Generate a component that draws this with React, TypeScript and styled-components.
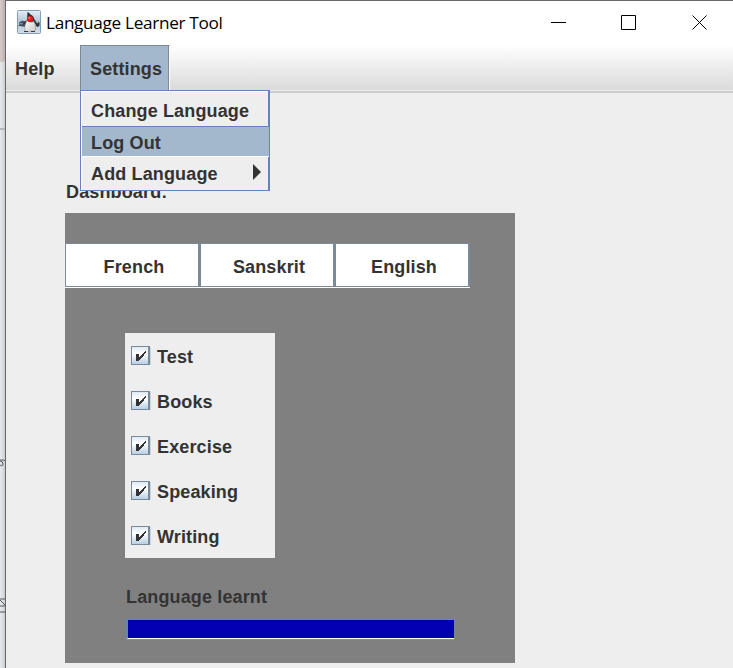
import React from "react";
import styled, { createGlobalStyle } from "styled-components";

const GlobalStyle = createGlobalStyle`
  * { box-sizing: border-box; }
  body { margin: 0; background: #eee; overflow: hidden; }
`;

const Desktop = styled.div`
  display: flex;
  width: 733px;
  height: 668px;
  overflow: hidden;
  color: #333;
  font: bold 18px/20px "Liberation Sans", Arial, sans-serif;
  letter-spacing: 0.14px;
`;

const Backdrop = styled.div`
  display: flex;
  flex-direction: column;
  width: 5px;
  flex: none;
  background: linear-gradient(90deg, #e9eaec, #dadcdf 60%, #c9cbce);
`;

const BackdropTop = styled.div`
  height: 62px;
  border-radius: 0 0 3px 0;
  background: linear-gradient(90deg, #d5cccb, #b9b0af);
`;

const BackdropLine = styled.div`
  height: 2px;
  margin-top: 66px;
  background: #b4b6b9;
`;

const BackdropMarks = styled.svg`
  display: block;
  width: 6px;
  height: 160px;
  margin-top: 326px;
  overflow: visible;
`;

const Window = styled.main`
  flex: 1;
  display: flex;
  flex-direction: column;
  min-width: 0;
  border-left: 1px solid #686868;
  border-top: 1px solid #686868;
  background: #eee;
`;

const TitleBar = styled.header`
  display: flex;
  align-items: center;
  height: 44px;
  flex: none;
  padding-left: 11px;
  background: #fff;
`;

const AppIcon = styled.svg`
  width: 24px;
  height: 24px;
  flex: none;
  margin-top: -2px;
`;

const Title = styled.h1`
  flex: 1;
  margin: 0 0 0 4px;
  padding-left: 1px;
  color: #000;
  font: 400 17.2px/24px "Open Sans", "Noto Sans", sans-serif;
  letter-spacing: -0.32px;
  white-space: nowrap;
`;

const WindowControls = styled.div`
  display: flex;
  gap: 55px;
  margin-right: 25px;
`;

const ControlIcon = styled.svg`
  width: 16px;
  height: 16px;
  fill: none;
  stroke: #000;
  stroke-width: 1;
`;

const MenuBar = styled.nav`
  display: flex;
  height: 48px;
  flex: none;
  padding-bottom: 3px;
  border-bottom: 2px solid #ccc;
  background: linear-gradient(#fff, #dadada 45px, #eee 45px);
`;

const MenuTitle = styled.div<{ $open?: boolean }>`
  position: relative;
  width: ${(p) => (p.$open ? 90 : 74)}px;
  height: 46px;
  padding: ${(p) => (p.$open ? "13px 0 0 9px" : "14px 0 0 9px")};
  ${(p) =>
    p.$open &&
    `border-top: 1px solid #7a8a99;
     border-left: 1px solid #7a8a99;
     border-right: 1px solid #fff;
     box-shadow: inset -1px 0 #7a8a99;
     background: #a3b8cc;`}
`;

const Popup = styled.div`
  position: absolute;
  left: -1px;
  top: 44px;
  z-index: 1;
  width: 190px;
  height: 101px;
  border: 1px solid #6382bf;
  border-right-width: 2px;
  background: #eee;
  box-shadow: inset 1px 1px #fff;
`;

const MenuItem = styled.div<{ $selected?: boolean }>`
  display: flex;
  justify-content: space-between;
  height: ${(p) => (p.$selected ? 31 : 35)}px;
  margin: ${(p) => (p.$selected ? "0 -1px 0 1px" : "0")};
  padding: ${(p) => (p.$selected ? "6px 0 0 9px" : "10px 7px 0 10px")};
  white-space: nowrap;
  ${(p) =>
    p.$selected &&
    `border-top: 1px solid #6382bf; border-bottom: 1px solid #fff; background: #a3b8cc;`}
  &:last-child {
    padding-top: 7px;
  }
`;

const SubmenuArrow = styled.svg`
  width: 8px;
  height: 16px;
  fill: #333;
`;

const Content = styled.section`
  padding: 89px 0 0 59px;
`;

const Heading = styled.h2`
  margin: 0 0 11px 1px;
  font: inherit;
`;

const Dashboard = styled.div`
  width: 450px;
  height: 450px;
  padding-top: 30px;
  background: #808080;
`;

const LanguageTabs = styled.div`
  display: grid;
  grid-template-columns: repeat(3, 135px);
  width: 405px;
  height: 45px;
  border-bottom: 1px solid #fff;
`;

const LanguageTab = styled.button`
  padding: 4px 0 0 4px;
  border: 1px solid #7a8a99;
  border-right-width: 2px;
  background: #fff;
  color: inherit;
  font: inherit;
  letter-spacing: inherit;
`;

const Skills = styled.div`
  width: 150px;
  height: 225px;
  margin: 45px 0 0 60px;
  background: #eee;
`;

const Skill = styled.div`
  display: flex;
  height: 45px;
  padding: 13px 0 0 6px;
`;

const CheckBox = styled.svg`
  width: 20px;
  height: 20px;
  flex: none;
`;

const SkillName = styled.span`
  padding: 1px 0 0 6px;
`;

const ProgressLabel = styled.div`
  margin: 29px 0 0 61px;
`;

const ProgressTrack = styled.div`
  width: 330px;
  height: 22px;
  margin: 11px 0 0 60px;
  border: 1px solid #778899;
  border-top: 2px solid #73849a;
  border-left: 2px solid #718396;
  border-bottom: 1px solid #8b8d99;
`;

const ProgressFill = styled.div`
  height: 19px;
  border-left: 1px solid #6382bf;
  border-bottom: 1px solid #fff;
  background: #0000b2;
`;

const skills = ["Test", "Books", "Exercise", "Speaking", "Writing"];

function JavaIcon() {
  return (
    <AppIcon viewBox="0 0 24 24">
      <defs>
        <linearGradient id="sky" x1="0" y1="0" x2="0" y2="1">
          <stop stopColor="#e4eef6" />
          <stop offset=".5" stopColor="#b4c4d5" />
          <stop offset="1" stopColor="#d2dfe9" />
        </linearGradient>
        <linearGradient id="belly" x1="0" y1="0" x2="1" y2="1">
          <stop stopColor="#fff" />
          <stop offset="1" stopColor="#c9c9c9" />
        </linearGradient>
      </defs>
      <rect x=".5" y=".5" width="23" height="23" rx="1" fill="url(#sky)" stroke="#849db6" />
      <path d="M2 13q2-3 5-2l3 1-1 5-6-1z" fill="#465668" />
      <path d="M3 13l4 .5-.5 1.5-3-.5z" fill="#86bbe0" />
      <path d="M10.500 2q1.500 0 3 2.500 3 1 4 5l2 3 1.500 1 .5-2 1 1v3l-1.500 1.500-2-1-1-3-8-1-3.500 3-2 1q2-4 5.500-6z" fill="#303234" />
      <path d="M10 10q4 4 6.500 1 3 5 2 9-1 2.500-4.500 1-4 1.500-6 0-1-5 2-11z" fill="url(#belly)" stroke="#777" strokeWidth=".4" />
      <circle cx="13" cy="9" r="3.100" fill="#d91c1f" />
      <circle cx="12.300" cy="8" r="1.200" fill="#f7605a" />
      <path d="M1.500 16l3-2M7 21.500h4M14 21.500h4" stroke="#35393d" fill="none" />
    </AppIcon>
  );
}

function CheckedBox() {
  return (
    <CheckBox viewBox="0 0 20 20" shapeRendering="crispEdges">
      <defs>
        <linearGradient id="boxFill" x1="0" y1="0" x2="0" y2="1">
          <stop stopColor="#dfe9f3" />
          <stop offset=".4" stopColor="#fff" />
          <stop offset="1" stopColor="#b8cfe5" />
        </linearGradient>
      </defs>
      <path d="M19 1h1v18h-1z" fill="#c9d5e1" />
      <path d="M0 0h19v19H0z" fill="#7a8a99" />
      <path d="M1 1h16v17H1z" fill="url(#boxFill)" />
      <path d="M5 8h3v3h1v-1h1V9h1V8h1V7h1V6h1V5h1v2h-1v1h-1v2h-1v1h-1v1h-1v1H9v1H8v1H5z" fill="#333" />
    </CheckBox>
  );
}

export default function App() {
  return (
    <>
      <GlobalStyle />
      <Desktop>
        <Backdrop>
          <BackdropTop />
          <BackdropLine />
          <BackdropMarks viewBox="0 0 6 160" fill="none" stroke="#55575a">
            <path d="M0 4h3q2 0 3 2M0 9q3 2 3-1T0 5" />
            <path d="M0 143h5M0 150h5M0 144l5 5M0 156h5" />
          </BackdropMarks>
        </Backdrop>
        <Window>
          <TitleBar>
            <JavaIcon />
            <Title>Language Learner Tool</Title>
            <WindowControls>
              <ControlIcon viewBox="0 0 16 16"><path d="M1 7.5h15" /></ControlIcon>
              <ControlIcon viewBox="0 0 16 16"><path d="M.5 .5h14v14H.5z" /></ControlIcon>
              <ControlIcon viewBox="0 0 16 16"><path d="M.5 .5l14 14M14.5 .5l-14 14" /></ControlIcon>
            </WindowControls>
          </TitleBar>
          <MenuBar>
            <MenuTitle>Help</MenuTitle>
            <MenuTitle $open>
              Settings
              <Popup>
                <MenuItem>Change Language</MenuItem>
                <MenuItem $selected>Log Out</MenuItem>
                <MenuItem>
                  Add Language
                  <SubmenuArrow viewBox="0 0 8 16"><path d="M0 0l8 8-8 8z" /></SubmenuArrow>
                </MenuItem>
              </Popup>
            </MenuTitle>
          </MenuBar>
          <Content>
            <Heading>Dashboard:</Heading>
            <Dashboard>
              <LanguageTabs>
                <LanguageTab>French</LanguageTab>
                <LanguageTab>Sanskrit</LanguageTab>
                <LanguageTab>English</LanguageTab>
              </LanguageTabs>
              <Skills>
                {skills.map((name) => (
                  <Skill key={name}>
                    <CheckedBox />
                    <SkillName>{name}</SkillName>
                  </Skill>
                ))}
              </Skills>
              <ProgressLabel>Language learnt</ProgressLabel>
              <ProgressTrack>
                <ProgressFill />
              </ProgressTrack>
            </Dashboard>
          </Content>
        </Window>
      </Desktop>
    </>
  );
}
